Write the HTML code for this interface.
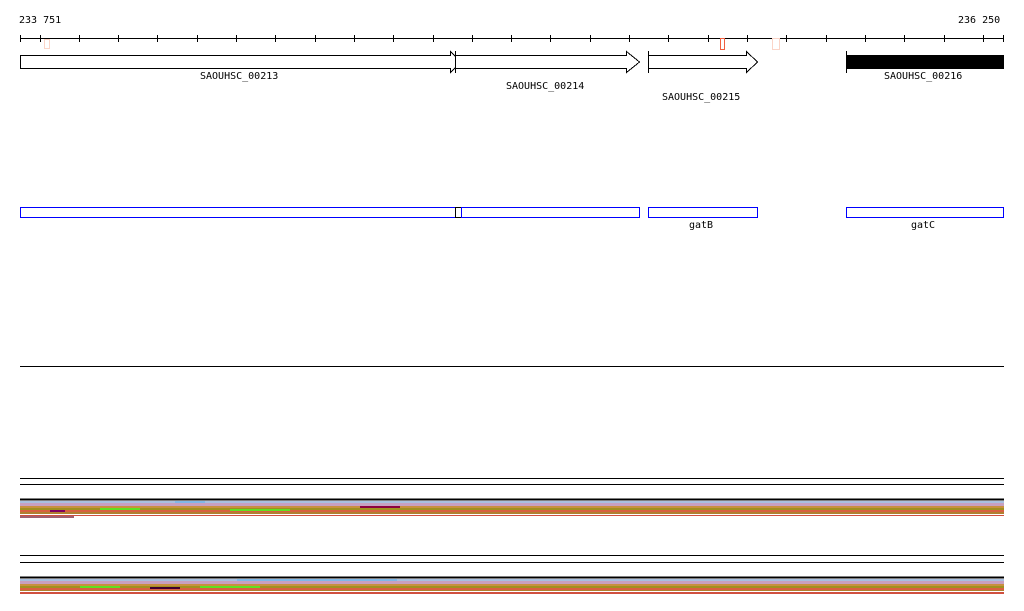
<!DOCTYPE html>
<html><head><style>body{margin:0;background:#fff}svg{display:block}text{font-family:"DejaVu Sans Mono","Liberation Mono",monospace;font-size:10px}</style></head><body>
<svg width="1024" height="611" xmlns="http://www.w3.org/2000/svg" shape-rendering="crispEdges">
<text x="19" y="23">233 751</text><text x="958" y="23">236 250</text>
<line x1="20" y1="38.5" x2="1004" y2="38.5" stroke="#000"/>
<g stroke="#000">
<line x1="20.5" y1="35" x2="20.5" y2="42"/><line x1="40.5" y1="35" x2="40.5" y2="42"/>
<line x1="79.5" y1="35" x2="79.5" y2="42"/><line x1="118.5" y1="35" x2="118.5" y2="42"/><line x1="157.5" y1="35" x2="157.5" y2="42"/><line x1="197.5" y1="35" x2="197.5" y2="42"/><line x1="236.5" y1="35" x2="236.5" y2="42"/><line x1="275.5" y1="35" x2="275.5" y2="42"/><line x1="315.5" y1="35" x2="315.5" y2="42"/><line x1="354.5" y1="35" x2="354.5" y2="42"/><line x1="393.5" y1="35" x2="393.5" y2="42"/><line x1="433.5" y1="35" x2="433.5" y2="42"/><line x1="472.5" y1="35" x2="472.5" y2="42"/><line x1="511.5" y1="35" x2="511.5" y2="42"/><line x1="550.5" y1="35" x2="550.5" y2="42"/><line x1="590.5" y1="35" x2="590.5" y2="42"/><line x1="629.5" y1="35" x2="629.5" y2="42"/><line x1="668.5" y1="35" x2="668.5" y2="42"/><line x1="708.5" y1="35" x2="708.5" y2="42"/><line x1="747.5" y1="35" x2="747.5" y2="42"/><line x1="786.5" y1="35" x2="786.5" y2="42"/><line x1="826.5" y1="35" x2="826.5" y2="42"/><line x1="865.5" y1="35" x2="865.5" y2="42"/><line x1="904.5" y1="35" x2="904.5" y2="42"/><line x1="944.5" y1="35" x2="944.5" y2="42"/><line x1="983.5" y1="35" x2="983.5" y2="42"/><line x1="1003.5" y1="35" x2="1003.5" y2="42"/>
</g>
<rect x="44.5" y="39.5" width="5" height="9" fill="none" stroke="#fbd5c8"/>
<rect x="720.5" y="38.5" width="4" height="11" fill="none" stroke="#f06040"/>
<rect x="772.5" y="38.5" width="7" height="11" fill="none" stroke="#fbd5c8"/>
<g fill="#fff" stroke="#000">
<polygon points="20.5,55.5 450.5,55.5 450.5,51.5 461.5,62 450.5,72.5 450.5,68.5 20.5,68.5"/>
<polygon points="455.5,55.5 626.5,55.5 626.5,51.5 639.5,62 626.5,72.5 626.5,68.5 455.5,68.5"/>
<line x1="455.5" y1="51" x2="455.5" y2="73"/>
<polygon points="648.5,55.5 746.5,55.5 746.5,51.5 757.5,62 746.5,72.5 746.5,68.5 648.5,68.5"/>
<line x1="648.5" y1="51" x2="648.5" y2="73"/>
</g>
<rect x="846" y="55" width="158" height="14" fill="#000"/><line x1="846.5" y1="51" x2="846.5" y2="73" stroke="#000"/>
<text x="200" y="79">SAOUHSC_00213</text><text x="506" y="89">SAOUHSC_00214</text><text x="662" y="100">SAOUHSC_00215</text><text x="884" y="79">SAOUHSC_00216</text>
<g fill="none" stroke="#00f">
<rect x="20.5" y="207.5" width="435" height="10"/><rect x="455.5" y="207.5" width="6" height="10" stroke="#000"/><rect x="461.5" y="207.5" width="178" height="10"/><rect x="648.5" y="207.5" width="109" height="10"/><rect x="846.5" y="207.5" width="157" height="10"/>
</g>
<text x="689" y="228">gatB</text><text x="911" y="228">gatC</text>
<g stroke="#000">
<line x1="20" y1="366.5" x2="1004" y2="366.5"/>
<line x1="20" y1="478.5" x2="1004" y2="478.5"/><line x1="20" y1="484.5" x2="1004" y2="484.5"/>
<line x1="20" y1="499.5" x2="1004" y2="499.5" stroke-width="2"/>
<line x1="20" y1="555.5" x2="1004" y2="555.5"/><line x1="20" y1="562.5" x2="1004" y2="562.5"/>
<line x1="20" y1="577.5" x2="1004" y2="577.5" stroke-width="2"/>
</g>
<g>
<rect x="20" y="501" width="984" height="2" fill="#a8c0e0"/>
<rect x="20" y="503" width="984" height="3" fill="#c8a0c0"/>
<rect x="20" y="506" width="984" height="2" fill="#c89040"/>
<rect x="20" y="508" width="984" height="2" fill="#a09020"/>
<rect x="20" y="510" width="984" height="2" fill="#d86040"/>
<rect x="20" y="512" width="984" height="2" fill="#b08030"/>
<rect x="20" y="514" width="984" height="1" fill="#fff"/>
<rect x="20" y="515" width="984" height="1" fill="#d05040"/>
<rect x="20" y="516" width="54" height="2" fill="#a06070"/>
<rect x="100" y="508" width="40" height="2" fill="#60e020"/>
<rect x="230" y="509" width="60" height="2" fill="#60e020"/>
<rect x="50" y="510" width="15" height="2" fill="#800060"/>
<rect x="360" y="506" width="40" height="2" fill="#8c0040"/>
<rect x="175" y="501" width="30" height="2" fill="#80b8e8"/>
<rect x="20" y="579" width="984" height="2" fill="#a8c0e0"/>
<rect x="20" y="581" width="984" height="3" fill="#c8a0c0"/>
<rect x="20" y="584" width="984" height="2" fill="#c89040"/>
<rect x="20" y="586" width="984" height="2" fill="#a09020"/>
<rect x="20" y="588" width="984" height="2" fill="#d86040"/>
<rect x="20" y="590" width="984" height="1" fill="#b08030"/>
<rect x="20" y="591" width="984" height="1" fill="#fff"/>
<rect x="20" y="592" width="984" height="2" fill="#d05040"/>
<rect x="237" y="579" width="160" height="2" fill="#80b8e8"/>
<rect x="80" y="586" width="40" height="2" fill="#60e020"/>
<rect x="200" y="586" width="60" height="2" fill="#60e020"/>
<rect x="150" y="587" width="30" height="2" fill="#400030"/>
</g>
</svg>
</body></html>
